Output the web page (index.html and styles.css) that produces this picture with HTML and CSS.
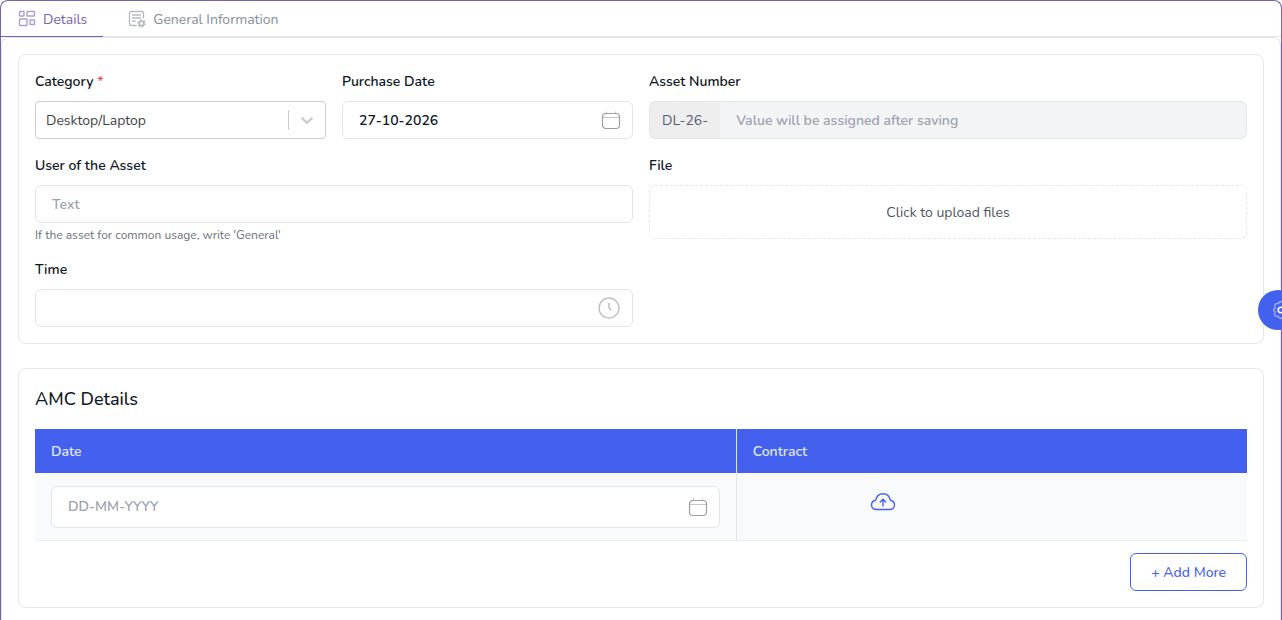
FILE: index.html
```html
<!DOCTYPE html>
<html lang="en">
<head>
    <meta charset="UTF-8">
    <meta name="viewport" content="width=device-width, initial-scale=1.0">
    <title>Asset Details</title>
    <link rel="stylesheet" href="styles.css">
</head>
<body>

    <div class="page">
        <nav class="tabs">
            <button type="button" class="tab active">
                <svg width="18" height="18" viewBox="0 0 18 18" fill="none" stroke="currentColor" stroke-width="1.4">
                    <rect x="1.500" y="1.500" width="4.500" height="4.500" rx=".5"/>
                    <rect x="9" y="1.500" width="7.500" height="4.500" rx=".5"/>
                    <rect x="1.500" y="9" width="7.500" height="6.500" rx=".5"/>
                    <rect x="12" y="10" width="4.500" height="4.500" rx=".5"/>
                </svg>
                Details
            </button>
            <button type="button" class="tab">
                <svg width="18" height="18" viewBox="0 0 18 18" fill="none" stroke="currentColor" stroke-width="1.3">
                    <path d="M8.5 15.5H3A1.5 1.5 0 0 1 1.5 14V3A1.5 1.5 0 0 1 3 1.500h11A1.500 1.500 0 0 1 15.500 3v5.500M4 5h9M4 8h9M4 11h3.500"/>
                    <circle cx="13.500" cy="13.500" r="2.300" stroke-width="1.800"/>
                    <circle cx="13.500" cy="13.500" r="3.700" stroke-width="1.300" stroke-dasharray="1.600 2.270"/>
                </svg>
                General Information
            </button>
        </nav>

        <main class="panel">
            <section class="card form">
                <div class="field">
                    <label for="category">Category <span class="required">*</span></label>
                    <div class="control">
                        <select id="category" class="input select">
                            <option>Desktop/Laptop</option>
                        </select>
                        <span class="select-arrow">
                            <svg width="20" height="20" viewBox="0 0 20 20" fill="currentColor">
                                <path d="M4.516 7.548c0.436-0.446 1.043-0.481 1.576 0l3.908 3.747 3.908-3.747c0.533-0.481 1.141-0.446 1.574 0 0.436 0.445 0.408 1.197 0 1.615-0.406 0.418-4.695 4.502-4.695 4.502-0.217 0.223-0.502 0.335-0.787 0.335s-0.570-0.112-0.789-0.335c0 0-4.287-4.084-4.695-4.502s-0.436-1.170 0-1.615z"/>
                            </svg>
                        </span>
                    </div>
                </div>

                <div class="field">
                    <label for="purchase-date">Purchase Date</label>
                    <div class="control">
                        <input type="text" id="purchase-date" class="input" value="27-10-2026">
                        <svg class="input-icon" width="20" height="20" viewBox="0 0 20 20" fill="none" stroke="currentColor">
                            <rect x="1.500" y="3.500" width="17" height="15" rx="3.500" stroke-width="1.200"/>
                            <path d="M2 7.500h16M5.500 1.500v2M14.500 1.500v2" stroke-width=".6"/>
                        </svg>
                    </div>
                </div>

                <div class="field wide">
                    <label for="asset-number">Asset Number</label>
                    <div class="input-group">
                        <span class="prefix">DL-26-</span>
                        <input type="text" id="asset-number" class="group-input" placeholder="Value will be assigned after saving" disabled>
                    </div>
                </div>

                <div class="field wide">
                    <label for="asset-user">User of the Asset</label>
                    <input type="text" id="asset-user" class="input" placeholder="Text">
                    <p class="help">If the asset for common usage, write 'General'</p>
                </div>

                <div class="field wide">
                    <label for="file">File</label>
                    <button type="button" id="file" class="upload">Click to upload files</button>
                </div>

                <div class="field wide">
                    <label for="time">Time</label>
                    <div class="control">
                        <input type="text" id="time" class="input">
                        <svg class="input-icon clock" width="24" height="24" viewBox="0 0 24 24" fill="none" stroke="currentColor">
                            <circle cx="12" cy="12" r="10" stroke-width="1.500"/>
                            <path d="M12 7v5l2.500 2.500" stroke-width="1.600"/>
                        </svg>
                    </div>
                </div>
            </section>

            <section class="card">
                <h2>AMC Details</h2>
                <table class="amc-table">
                    <thead>
                        <tr>
                            <th class="date-col">Date</th>
                            <th>Contract</th>
                        </tr>
                    </thead>
                    <tbody>
                        <tr>
                            <td>
                                <div class="control">
                                    <input type="text" class="input tall" placeholder="DD-MM-YYYY" aria-label="Date">
                                    <svg class="input-icon" width="20" height="20" viewBox="0 0 20 20" fill="none" stroke="currentColor">
                                        <rect x="1.500" y="3.500" width="17" height="15" rx="3.500" stroke-width="1.200"/>
                                        <path d="M2 7.500h16M5.500 1.500v2M14.500 1.500v2" stroke-width=".6"/>
                                    </svg>
                                </div>
                            </td>
                            <td class="contract">
                                <button type="button" class="cloud-btn" aria-label="Upload contract">
                                    <svg width="26" height="20" viewBox="0 0 26 20" fill="none" stroke="currentColor" stroke-width="1.400" stroke-linecap="round" stroke-linejoin="round">
                                        <path d="M6.500 17.500C3.500 17.500 1.500 15.500 1.500 13c0-2.400 1.600-4.300 4.200-4.800C6.500 4.300 9.300 1.700 13 1.700s6.500 2.600 7.300 6.500c2.600.5 4.200 2.400 4.200 4.800 0 2.500-2 4.500-5 4.500z"/>
                                        <path d="M13 14V7.500M10.200 10L13 7.200l2.800 2.800"/>
                                    </svg>
                                </button>
                            </td>
                        </tr>
                    </tbody>
                </table>
                <div class="actions">
                    <button type="button" class="add-btn">+ Add More</button>
                </div>
            </section>
        </main>
    </div>

    <button type="button" class="settings-btn" aria-label="Settings">
        <svg width="20" height="20" viewBox="0 0 20 20" fill="none" stroke="currentColor" stroke-width="1.300">
            <path d="M10 1.500c1.500 0 2.300.9 2.700 2.200 1.300-.4 2.600-.2 3.400 1 .8 1.300.4 2.400-.5 3.400.9.500 1.900 1 1.900 1.900s-1 1.400-1.900 1.900c.9 1 1.300 2.100.5 3.400-.8 1.200-2.100 1.400-3.400 1-.4 1.300-1.200 2.200-2.700 2.200s-2.300-.9-2.700-2.200c-1.300.4-2.600.2-3.400-1-.8-1.300-.4-2.400.5-3.400-.9-.5-1.900-1-1.900-1.900s1-1.400 1.900-1.900c-.9-1-1.300-2.100-.5-3.400.8-1.200 2.100-1.400 3.400-1C7.700 2.400 8.500 1.500 10 1.500z" stroke-opacity=".5"/>
            <circle cx="10" cy="10" r="2.800" stroke-width="1.600"/>
        </svg>
    </button>

</body>
</html>
```

FILE: styles.css
```css
* {
    box-sizing: border-box;
}

body {
    margin: 0;
    background-color: #fff;
    color: #0e1726;
    font-family: Nunito, Lato, sans-serif;
    font-size: 14px;
    line-height: 21px;
}

input, select, button {
    font-family: inherit;
    font-size: inherit;
    line-height: inherit;
}

button {
    cursor: pointer;
}

.page {
    display: flex;
    flex-direction: column;
    min-height: 100vh;
    border: 1px solid #7762b0;
    border-bottom: none;
    border-radius: 8px 8px 0 0;
}

.tabs {
    display: flex;
    gap: 8px;
    border-bottom: 1px solid #e0e6ed;
}

.tab {
    display: flex;
    align-items: center;
    gap: 7px;
    height: 36px;
    margin-bottom: -1px;
    padding: 1px 16px 0 17px;
    border: none;
    border-bottom: 1px solid transparent;
    background: none;
    color: #868e9a;
}

.tab svg {
    opacity: .6;
}

.tab.active {
    color: #7762b0;
    border-bottom-color: #7762b0;
}

.panel {
    display: flex;
    flex-direction: column;
    gap: 24px;
    flex: 1;
    padding: 16px 16px 12px;
    border: 1px solid #e4e4e9;
    border-bottom: none;
    border-radius: 8px 8px 0 0;
}

.card {
    padding: 16px;
    border: 1px solid #e5e7eb;
    border-radius: 8px;
}

.form {
    display: grid;
    grid-template-columns: repeat(4, 1fr);
    gap: 16px;
}

.wide {
    grid-column: span 2;
}

label {
    display: block;
    margin-bottom: 8px;
    font-weight: 600;
    line-height: 22px;
}

.required {
    color: #e7515a;
}

.control {
    position: relative;
}

.input {
    display: block;
    width: 100%;
    height: 38px;
    padding: 0 16px;
    border: 1px solid #e0e6e9;
    border-radius: 6px;
    background-color: #fff;
    color: #0e1726;
    font-weight: 600;
}

.tall {
    height: 42px;
}

::placeholder {
    color: #9ca3af;
    opacity: 1;
}

.select {
    appearance: none;
    padding: 1px 48px 0 10px;
    border-color: #ccc;
    border-radius: 4px;
    color: #3f4347;
    font-weight: 400;
}

.select-arrow {
    position: absolute;
    top: 9px;
    right: 1px;
    display: flex;
    padding: 0 8px;
    border-left: 1px solid #ccc;
    color: #ccc;
    pointer-events: none;
}

.input-icon {
    position: absolute;
    top: 50%;
    right: 12px;
    transform: translateY(-50%);
    color: #9b9ea3;
}

.clock {
    color: #bfc2c4;
}

.input-group {
    display: flex;
    height: 38px;
    border: 1px solid #e0e6e9;
    border-radius: 6px;
    background-color: #f3f4f6;
    overflow: hidden;
}

.prefix {
    display: flex;
    align-items: center;
    padding: 0 12px;
    background-color: #eee;
    color: #506070;
}

.group-input {
    flex: 1;
    padding: 0 16px;
    border: none;
    background: none;
    font-weight: 600;
}

.help {
    margin: 4px 0 0;
    color: #6b7280;
    font-size: 12px;
    line-height: 16px;
}

.upload {
    display: block;
    width: 100%;
    height: 54px;
    border: 1px dashed #e0e6e9;
    border-radius: 6px;
    background: none;
    color: #4b5563;
}

h2 {
    margin: 0 0 16px;
    font-size: 18px;
    font-weight: 500;
    line-height: 28px;
}

.amc-table {
    width: 100%;
    border-collapse: separate;
    border-spacing: 0;
    table-layout: fixed;
}

.amc-table th {
    height: 44px;
    padding: 0 16px;
    background-color: #4361ee;
    color: #e0e6ed;
    font-weight: 600;
    text-align: left;
}

.amc-table td {
    height: 68px;
    padding: 12px 16px;
    background-color: #f8fafc;
    border-bottom: 1px solid #eceff2;
}

.amc-table th:first-child,
.amc-table td:first-child {
    border-right: 1px solid #e0e6ed;
}

.date-col {
    width: 57.9%;
}

.contract {
    vertical-align: top;
}

.cloud-btn {
    display: flex;
    justify-content: center;
    width: 260px;
    padding: 7px 0;
    border: none;
    background: none;
    color: #4361ee;
}

.actions {
    display: flex;
    justify-content: flex-end;
    margin-top: 12px;
}

.add-btn {
    height: 38px;
    padding: 0 20px;
    border: 1px solid #4361ee;
    border-radius: 6px;
    background-color: #fff;
    color: #4361ee;
    font-weight: 500;
}

.settings-btn {
    position: fixed;
    top: 50%;
    right: -16px;
    display: flex;
    align-items: center;
    width: 40px;
    height: 40px;
    margin-top: -20px;
    padding: 0 0 0 13px;
    border: none;
    border-radius: 50%;
    background-color: #4361ee;
    color: #fff;
}
```
